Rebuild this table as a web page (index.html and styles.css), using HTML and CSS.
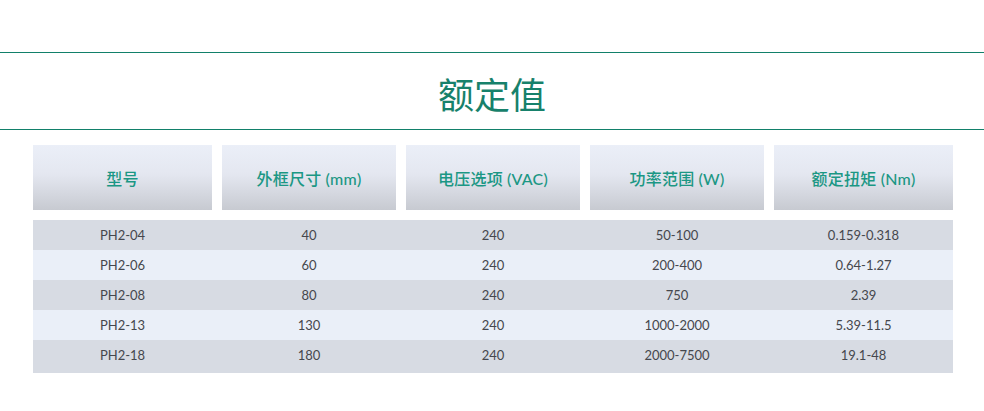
FILE: index.html
```html
<!DOCTYPE html>
<html lang="zh">
<head>
<meta charset="utf-8">
<link rel="stylesheet" href="styles.css">
</head>
<body>
<div class="page">
  <div class="title-band">
    <h1 class="title">额定值</h1>
  </div>
  <div class="table">
    <div class="head">
      <div class="hcell">型号</div>
      <div class="hcell">外框尺寸 (mm)</div>
      <div class="hcell">电压选项 (VAC)</div>
      <div class="hcell">功率范围 (W)</div>
      <div class="hcell">额定扭矩 (Nm)</div>
    </div>
    <div class="body">
      <div class="row odd"><span>PH2-04</span><span>40</span><span>240</span><span>50-100</span><span>0.159-0.318</span></div>
      <div class="row even"><span>PH2-06</span><span>60</span><span>240</span><span>200-400</span><span>0.64-1.27</span></div>
      <div class="row odd"><span>PH2-08</span><span>80</span><span>240</span><span>750</span><span>2.39</span></div>
      <div class="row even"><span>PH2-13</span><span>130</span><span>240</span><span>1000-2000</span><span>5.39-11.5</span></div>
      <div class="row odd last"><span>PH2-18</span><span>180</span><span>240</span><span>2000-7500</span><span>19.1-48</span></div>
    </div>
  </div>
</div>
</body>
</html>
```

FILE: styles.css
```css
html, body {
  margin: 0;
  padding: 0;
  background: #ffffff;
}

.page {
  padding-top: 52px;
  font-family: "Lato", "Noto Sans", "Noto Sans CJK SC", sans-serif;
}

.title-band {
  border-top: 1px solid #12806a;
  border-bottom: 1px solid #12806a;
  height: 76px;
  display: flex;
  align-items: center;
  justify-content: center;
}

.title {
  margin: 0;
  font-family: "Noto Sans CJK SC", sans-serif;
  font-weight: 400;
  font-size: 36px;
  line-height: 1;
  color: #17816b;
  padding-top: 4px;
}

.table {
  margin: 15px 0 0 33px;
  width: 920px;
}

.head,
.row {
  display: grid;
  grid-template-columns: 179px 174px 174px 174px 179px;
  column-gap: 10px;
}

.hcell {
  height: 65px;
  display: flex;
  align-items: center;
  justify-content: center;
  background: linear-gradient(to bottom, #ebeff8 0%, #e4e7f0 45%, #c7cad1 100%);
  color: #1b9784;
  font-family: "Lato", "Noto Sans CJK SC", sans-serif;
  font-weight: 500;
  font-size: 16px;
  letter-spacing: 0.2px;
}

.body {
  margin-top: 10px;
}

.row {
  height: 30px;
  align-items: center;
  font-size: 13px;
  color: #45474d;
}

.row span {
  text-align: center;
}

.odd {
  background: #d7dbe3;
}

.even {
  background: #eaeff8;
}

.row.last {
  height: 33px;
  padding-bottom: 3px;
  box-sizing: border-box;
}
```
